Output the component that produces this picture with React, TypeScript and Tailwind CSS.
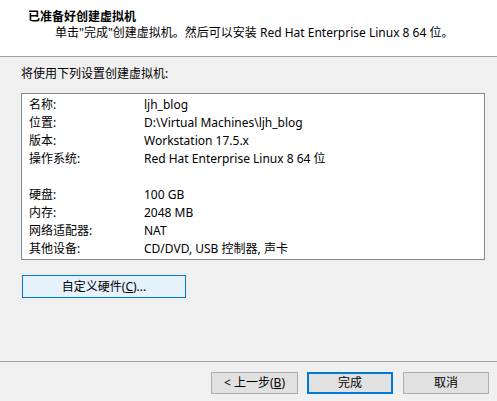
import React from "react";

const font = { fontFamily: '"Noto Sans", "Noto Sans CJK SC", sans-serif' };

const rows: [string, string][] = [
  ["名称:", "ljh_blog"],
  ["位置:", "D:\\Virtual Machines\\ljh_blog"],
  ["版本:", "Workstation 17.5.x"],
  ["操作系统:", "Red Hat Enterprise Linux 8 64 位"],
  ["", ""],
  ["硬盘:", "100 GB"],
  ["内存:", "2048 MB"],
  ["网络适配器:", "NAT"],
  ["其他设备:", "CD/DVD, USB 控制器, 声卡"],
];

export default function App() {
  return (
    <div
      className="w-[497px] h-[401px] bg-[#f0f0f0] flex flex-col text-[12px] text-black overflow-hidden"
      style={font}
    >
      <div className="h-[57px] bg-white border-b border-[#a0a0a0] flex flex-col pt-[8px]">
        <div className="pl-[28px] h-[17px] leading-[17px] font-bold">已准备好创建虚拟机</div>
        <div className="pl-[55px] h-[16px] leading-[16px]">
          单击"完成"创建虚拟机。然后可以安装 Red Hat Enterprise Linux 8 64 位。
        </div>
      </div>
      <div className="flex flex-col pl-[21px] pt-[8px]">
        <div className="h-[17px] leading-[17px]">将使用下列设置创建虚拟机:</div>
        <div className="mt-[11px] w-[464px] h-[167px] bg-white border border-[#828790] pt-[2px] pl-[7px]">
          {rows.map(([k, v], i) => (
            <div key={i} className="flex h-[18px] leading-[18px]">
              <div className="w-[115px]">{k}</div>
              <div>{v}</div>
            </div>
          ))}
        </div>
        <button className="mt-[15px] ml-[1px] w-[164px] h-[23px] bg-[#e5f1fb] border border-[#0078d7] text-[12px] leading-[20px]">
          自定义硬件(<span className="underline">C</span>)...
        </button>
      </div>
      <div className="mt-auto border-t border-[#a0a0a0] h-[40px] flex justify-end items-start pt-[10px] pr-[8px] gap-[9px]">
        <button className="w-[87px] h-[22px] bg-[#e1e1e1] border border-[#adadad] text-[12px] leading-[20px]">
          &lt; 上一步(<span className="underline">B</span>)
        </button>
        <button className="w-[86px] h-[22px] bg-[#e1e1e1] border-2 border-[#0078d7] text-[12px] leading-[18px]">
          完成
        </button>
        <button className="ml-[1px] w-[86px] h-[22px] bg-[#e1e1e1] border border-[#adadad] text-[12px] leading-[20px]">
          取消
        </button>
      </div>
    </div>
  );
}
